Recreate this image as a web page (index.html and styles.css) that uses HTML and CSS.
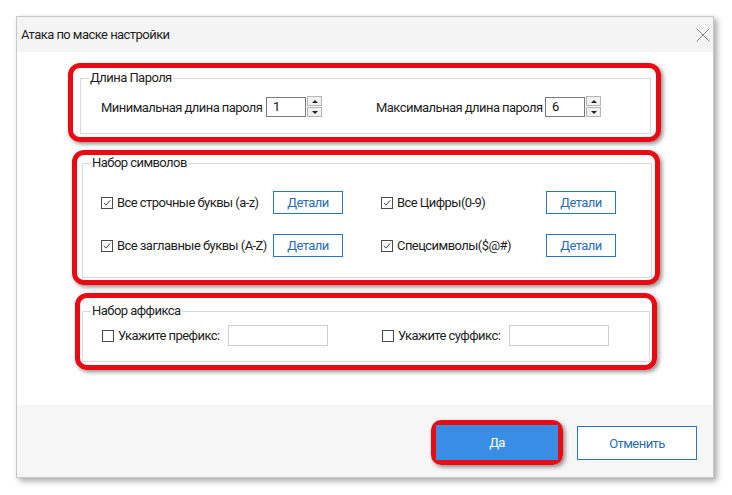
FILE: index.html
```html
<!DOCTYPE html>
<html lang="ru">
<head>
<meta charset="utf-8">
<title>Атака по маске настройки</title>
<link rel="stylesheet" href="styles.css">
</head>
<body>
<div class="dialog">
  <div class="titlebar">
    <span class="title">Атака по маске настройки</span>
    <svg class="close" width="14" height="14" viewBox="0 0 14 14"><path d="M0.5 0.5L13.5 13.5M13.5 0.5L0.5 13.5" stroke="#8a8a8a" stroke-width="1" fill="none"/></svg>
  </div>
  <div class="content">
    <div class="mark mark-1">
      <fieldset class="group group-1">
        <legend>Длина Пароля</legend>
        <div class="len-row">
          <span class="lbl">Минимальная длина пароля</span>
          <span class="num">1</span>
          <span class="spin"><span class="spin-btn"><span class="tri-up"></span></span><span class="spin-btn"><span class="tri-down"></span></span></span>
          <span></span>
          <span class="lbl">Максимальная длина пароля</span>
          <span class="num">6</span>
          <span class="spin"><span class="spin-btn"><span class="tri-up"></span></span><span class="spin-btn"><span class="tri-down"></span></span></span>
        </div>
      </fieldset>
    </div>
    <div class="mark mark-2">
      <fieldset class="group group-2">
        <legend>Набор символов</legend>
        <div class="chars-grid">
          <label class="chk"><span class="box"><svg width="12" height="12" viewBox="0 0 12 12"><path d="M2.2 5.8L4.8 8.6L9.8 2.8" stroke="#333" stroke-width="1.1" fill="none"/></svg></span>Все строчные буквы (a-z)</label>
          <span class="btn-detail">Детали</span>
          <span></span>
          <label class="chk"><span class="box"><svg width="12" height="12" viewBox="0 0 12 12"><path d="M2.2 5.8L4.8 8.6L9.8 2.8" stroke="#333" stroke-width="1.1" fill="none"/></svg></span>Все Цифры(0-9)</label>
          <span class="btn-detail">Детали</span>
          <label class="chk"><span class="box"><svg width="12" height="12" viewBox="0 0 12 12"><path d="M2.2 5.8L4.8 8.6L9.8 2.8" stroke="#333" stroke-width="1.1" fill="none"/></svg></span>Все заглавные буквы (A-Z)</label>
          <span class="btn-detail">Детали</span>
          <span></span>
          <label class="chk"><span class="box"><svg width="12" height="12" viewBox="0 0 12 12"><path d="M2.2 5.8L4.8 8.6L9.8 2.8" stroke="#333" stroke-width="1.1" fill="none"/></svg></span>Спецсимволы($@#)</label>
          <span class="btn-detail">Детали</span>
        </div>
      </fieldset>
    </div>
    <div class="mark mark-3">
      <fieldset class="group group-3">
        <legend>Набор аффикса</legend>
        <div class="affix-grid">
          <label class="chk"><span class="box"></span>Укажите префикс:</label>
          <span class="text-in"></span>
          <span></span>
          <label class="chk"><span class="box"></span>Укажите суффикс:</label>
          <span class="text-in"></span>
        </div>
      </fieldset>
    </div>
  </div>
  <div class="footer">
    <div class="mark-btn"><span class="btn-ok">Да</span></div>
    <span class="btn-cancel">Отменить</span>
  </div>
</div>
</body>
</html>
```
FILE: styles.css
```css
* { box-sizing: border-box; }
html, body { margin: 0; padding: 0; background: #ffffff; }
body {
  font-family: Roboto, "Noto Sans", sans-serif;
  font-size: 13px;
  letter-spacing: -0.55px;
  color: #1e1e1e;
  width: 732px;
  height: 495px;
  overflow: hidden;
}
.dialog {
  margin: 16px 0 0 16px;
  width: 698px;
  height: 462px;
  border: 1px solid #c9c9c9;
  box-shadow: 3px 3px 6px rgba(0,0,0,0.35);
  background: #fff;
  display: flex;
  flex-direction: column;
}
.titlebar {
  height: 35px;
  background: #f4f4f4;
  display: flex;
  align-items: center;
  justify-content: space-between;
  padding: 0 3px 0 4px;
}
.title { line-height: 18px; }
.close { display: block; }
.content {
  height: 353px;
  padding-top: 11px;
  display: flex;
  flex-direction: column;
  gap: 8px;
}
.mark {
  border: 5px solid #ea0a14;
  border-radius: 12px;
  box-shadow: 2px 2px 4px rgba(0,0,0,0.45);
}
.mark-1 { margin-left: 51px; width: 593px; padding: 2px 5px 3px 7px; }
.mark-2 { margin-left: 55px; width: 588px; padding: 0 3px 2px 5px; }
.mark-3 { margin-left: 58px; width: 582px; padding: 5px 2px 3px 2px; }
.group {
  margin: 0;
  padding: 0;
  border: 1px solid #d9d9d9;
  min-width: 0;
}
.group legend {
  margin-left: 8px;
  padding: 0 1px;
  line-height: 16px;
}
.group-1 { padding: 11px 0 16px 0; }
.group-2 { padding: 20px 0 20px 0; }
.group-3 { padding: 6px 0 15px 0; }
.len-row {
  display: grid;
  grid-template-columns: 165px 40px 15px 55px 169px 40px 15px;
  align-items: center;
  height: 20px;
  margin-left: 20px;
}
.lbl { white-space: nowrap; }
.num {
  height: 20px;
  border: 1px solid #7a7a7a;
  padding-left: 6px;
  line-height: 18px;
  color: #111;
}
.spin {
  display: flex;
  flex-direction: column;
  gap: 1px;
  margin-left: 1px;
  height: 21px;
  margin-top: -1px;
}
.spin-btn {
  height: 10px;
  width: 15px;
  border: 1px solid #b5b5b5;
  background: #f0f0f0;
  display: flex;
  align-items: center;
  justify-content: center;
}
.tri-up, .tri-down { width: 0; height: 0; border-left: 3px solid transparent; border-right: 3px solid transparent; }
.tri-up { border-bottom: 3px solid #222; }
.tri-down { border-top: 3px solid #222; }
.chars-grid {
  display: grid;
  grid-template-columns: 172px 70px 38px 165px 70px;
  row-gap: 20px;
  align-items: center;
  margin-left: 18px;
}
.chk {
  display: flex;
  align-items: center;
  gap: 4px;
  line-height: 18px;
  white-space: nowrap;
}
.box {
  width: 12px;
  height: 12px;
  border: 1px solid #4a4a4a;
  background: #fff;
  display: flex;
  align-items: center;
  justify-content: center;
  flex: none;
}
.box svg { display: block; }
.btn-detail {
  height: 23px;
  border: 1px solid #2a74c4;
  color: #2b6db5;
  display: flex;
  align-items: center;
  justify-content: center;
}
.affix-grid {
  display: grid;
  grid-template-columns: 126px 100px 54px 127px 100px;
  align-items: center;
  margin-left: 19px;
}
.text-in {
  height: 21px;
  border: 1px solid #cfcfcf;
}
.footer {
  flex: 1;
  background: #f6f6f6;
  display: flex;
  justify-content: flex-end;
  align-items: flex-start;
  gap: 14px;
  padding: 15px 16px 0 0;
}
.mark-btn {
  border: 5px solid #ea0a14;
  border-radius: 10px;
  box-shadow: 2px 2px 4px rgba(0,0,0,0.45);
}
.btn-ok {
  display: flex;
  width: 122px;
  height: 35px;
  background: #3a8de4;
  color: #fff;
  align-items: center;
  justify-content: center;
}
.btn-cancel {
  margin-top: 6px;
  width: 120px;
  height: 34px;
  border: 1px solid #2a74c4;
  color: #2b6db5;
  background: #fff;
  display: flex;
  align-items: center;
  justify-content: center;
}
```
